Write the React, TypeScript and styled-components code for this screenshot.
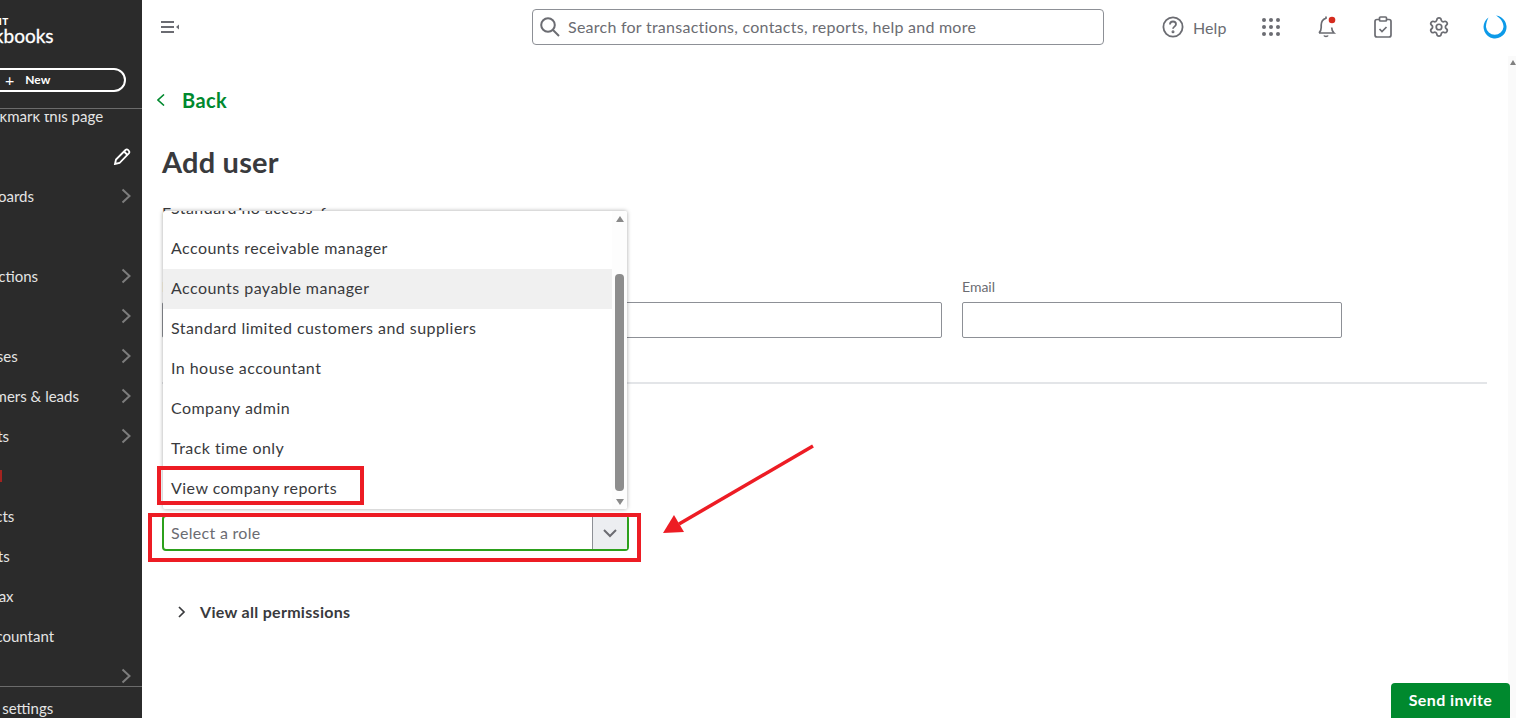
import styled, { createGlobalStyle } from 'styled-components';
import { Settings } from 'lucide-react';

const GlobalStyle = createGlobalStyle`
  html, body { margin: 0; padding: 0; height: 718px; overflow: hidden; background: #fff; }
  body { font-family: Lato, "Open Sans", sans-serif; color: #393a3d; }
`;

const navItems = [
  { label: 'Dashboards', more: true },
  { label: 'Feed', more: false },
  { label: 'Transactions', more: true },
  { label: 'Sales', more: true },
  { label: 'Expenses', more: true },
  { label: 'Customers & leads', more: true },
  { label: 'Projects', more: true },
  { label: 'Time', more: false },
  { label: 'Products', more: false },
  { label: 'Budgets', more: false },
  { label: 'Sales tax', more: false },
  { label: 'My accountant', more: false },
  { label: 'Apps', more: true },
];

const roles = [
  'Standard no access',
  'Accounts receivable manager',
  'Accounts payable manager',
  'Standard limited customers and suppliers',
  'In house accountant',
  'Company admin',
  'Track time only',
  'View company reports',
];

const Page = styled.div`
  display: flex;
  width: 1516px;
  height: 718px;
  overflow: hidden;
  position: relative;
`;

const Sidebar = styled.aside`
  width: 142px;
  flex: none;
  height: 100%;
  background: #2b2b2b;
  color: #e4e4e4;
  display: flex;
  flex-direction: column;
  overflow: hidden;
  font-size: 15px;
`;

const SideTop = styled.div`
  height: 109px;
  flex: none;
  box-sizing: border-box;
  border-bottom: 1px solid #6b6b6b;
  margin-left: -44px;
  margin-bottom: 5px;
  padding-top: 16px;
`;

const Intuit = styled.div`
  font-size: 10px;
  line-height: 10px;
  font-weight: 900;
  letter-spacing: 0.4px;
  color: #fff;
  margin-left: 17px;
`;

const Wordmark = styled.div`
  font-size: 19px;
  line-height: 20px;
  font-weight: 400;
  color: #fff;
  margin-left: 3px;
  -webkit-text-stroke: 0.3px #fff;
`;

const NewButton = styled.div`
  box-sizing: border-box;
  display: flex;
  align-items: center;
  gap: 11px;
  width: 170px;
  height: 24px;
  margin-top: 22px;
  padding: 0 0 1px 47px;
  border: 2px solid #fff;
  border-radius: 12px;
  color: #fff;
  font-size: 12px;
  font-weight: 700;
`;

const PlusSign = styled.span`
  font-size: 16px;
  font-weight: 400;
  line-height: 16px;
`;

const SideScroll = styled.div`
  flex: 1;
  overflow: hidden;
  margin-left: -44px;
  position: relative;
`;

const SideRow = styled.div`
  height: 40px;
  display: flex;
  align-items: center;
  justify-content: space-between;
  padding-right: 11px;
  white-space: nowrap;
`;

const BookmarkRow = styled(SideRow)`
  margin-top: -18px;
  padding-left: 17px;
`;

const Flag = styled.span`
  position: absolute;
  left: 44px;
  top: 356px;
  width: 2px;
  height: 12px;
  background: #a3231f;
`;

const SideBottom = styled.div`
  height: 32px;
  flex: none;
  box-sizing: border-box;
  border-top: 1px solid #6b6b6b;
  margin-left: -44px;
  padding: 12px 0 0 4px;
  line-height: 18px;
`;

const Main = styled.main`
  flex: 1;
  min-width: 0;
  display: flex;
  flex-direction: column;
  position: relative;
`;

const TopBar = styled.header`
  height: 54px;
  flex: none;
  display: flex;
  align-items: center;
  color: #6b6c72;
`;

const MenuToggle = styled.svg`
  margin-left: 19px;
  flex: none;
`;

const SearchBox = styled.div`
  box-sizing: border-box;
  flex: none;
  width: 572px;
  height: 36px;
  margin-left: 351px;
  display: flex;
  align-items: center;
  gap: 8px;
  padding: 0 0 1px 7px;
  border: 1px solid #8d9096;
  border-radius: 4px;
  font-size: 16px;
  letter-spacing: 0.25px;
  color: #6b6c72;
`;

const TopIcons = styled.div`
  display: flex;
  align-items: center;
  margin-left: 58px;
`;

const HelpLabel = styled.span`
  font-size: 16px;
  margin: 0 16px 0 9px;
  letter-spacing: 0.1px;
  color: #6b6c72;
`;

const IconSlot = styled.span`
  width: 56px;
  height: 28px;
  display: flex;
  align-items: center;
  justify-content: center;
`;

const Content = styled.div`
  flex: 1;
  display: flex;
  flex-direction: column;
  padding-left: 20px;
  position: relative;
`;

const BackLink = styled.div`
  display: flex;
  align-items: center;
  gap: 16px;
  height: 28px;
  margin: 32px 0 0 -5px;
  color: #00892e;
  font-size: 20px;
  font-weight: 700;
  letter-spacing: 0.4px;
`;

const Title = styled.h1`
  margin: 30px 0 0;
  font-size: 29px;
  line-height: 36px;
  font-weight: 700;
  letter-spacing: 0.2px;
  color: #393a3d;
`;

const ClippedLine = styled.div`
  margin-top: 22px;
  height: 21px;
  font-size: 16px;
  line-height: 22px;
  letter-spacing: 0.3px;
`;

const FieldRow = styled.div`
  display: grid;
  grid-template-columns: 780px 380px;
  column-gap: 20px;
  margin-top: 56px;
`;

const Field = styled.label`
  display: flex;
  flex-direction: column;
  gap: 7px;
  font-size: 14px;
  line-height: 16px;
  color: #6b6c72;
`;

const TextBox = styled.div`
  box-sizing: border-box;
  height: 36px;
  border: 1px solid #8d9096;
  border-radius: 2px;
`;

const Rule = styled.hr`
  width: 1325px;
  margin: 44px 0 0;
  border: 0;
  border-top: 2px solid #e3e5e8;
`;

const RoleSelect = styled.div`
  box-sizing: border-box;
  display: flex;
  align-items: stretch;
  width: 467px;
  height: 36px;
  margin-top: 131px;
  border: 2px solid #2ca01c;
  border-radius: 4px;
  font-size: 16px;
`;

const RoleValue = styled.div`
  flex: 1;
  display: flex;
  align-items: center;
  padding: 0 0 1px 7px;
  letter-spacing: 0.3px;
  color: #6b6c72;
`;

const RoleCaret = styled.div`
  width: 34px;
  display: flex;
  align-items: center;
  justify-content: center;
  background: #eceef1;
  border-left: 1px solid #8d9096;
`;

const Permissions = styled.div`
  display: flex;
  align-items: center;
  gap: 14px;
  margin: 50px 0 0 15px;
  font-size: 16px;
  line-height: 22px;
  font-weight: 700;
  letter-spacing: 0.3px;
`;

const SendInvite = styled.button`
  position: absolute;
  right: 6px;
  bottom: 0;
  z-index: 1;
  width: 119px;
  height: 35px;
  padding: 0 0 2px;
  border: 0;
  border-radius: 4px 4px 0 0;
  background: #00892e;
  color: #fff;
  font-family: inherit;
  font-size: 16px;
  font-weight: 700;
  letter-spacing: 0.4px;
`;

const PageScrollbar = styled.div`
  position: absolute;
  right: 0;
  top: 56px;
  bottom: 0;
  width: 8px;
  background: #fafafa;
`;

const PageArrow = styled.span`
  display: block;
  width: 0;
  margin: 4px 0 0 2px;
  border-left: 3px solid transparent;
  border-right: 3px solid transparent;
  border-bottom: 5px solid #808080;
`;

const RoleMenu = styled.div`
  position: absolute;
  left: 163px;
  top: 211px;
  width: 464px;
  height: 298px;
  display: flex;
  background: #fff;
  border-radius: 2px;
  box-shadow: 0 0 4px rgba(0, 0, 0, 0.35);
  overflow: hidden;
`;

const RoleList = styled.div`
  flex: 1;
  margin-top: -22px;
`;

const RoleItem = styled.div<{ $active?: boolean }>`
  box-sizing: border-box;
  height: 40px;
  display: flex;
  align-items: center;
  padding: 0 0 4px 8px;
  font-size: 16px;
  letter-spacing: 0.45px;
  background: ${(p) => (p.$active ? '#f0f0f0' : 'transparent')};
`;

const MenuScrollbar = styled.div`
  width: 15px;
  flex: none;
  display: flex;
  flex-direction: column;
  align-items: center;
  background: #fdfdfd;
`;

const ArrowUp = styled.span`
  margin-top: 5px;
  border-left: 4.5px solid transparent;
  border-right: 4.5px solid transparent;
  border-bottom: 6px solid #8a8a8a;
`;

const ArrowDown = styled.span`
  margin-top: 8px;
  border-left: 4.5px solid transparent;
  border-right: 4.5px solid transparent;
  border-top: 6px solid #8a8a8a;
`;

const Thumb = styled.div`
  width: 9px;
  height: 217px;
  margin-top: 52px;
  border-radius: 4px;
  background: #8d8d8d;
`;

const RedBox = styled.div<{ $x: number; $y: number; $w: number; $h: number }>`
  position: absolute;
  box-sizing: border-box;
  left: ${(p) => p.$x}px;
  top: ${(p) => p.$y}px;
  width: ${(p) => p.$w}px;
  height: ${(p) => p.$h}px;
  border: 4px solid #ed1c24;
`;

const RedArrow = styled.svg`
  position: absolute;
  left: 655px;
  top: 440px;
`;

const Chevron = () => (
  <svg width="10" height="16" viewBox="0 0 10 16" fill="none" stroke="#7d7d7d" strokeWidth="2">
    <path d="M1.5 1.5 8.5 8l-7 6.5" />
  </svg>
);

const App = () => {
  return (
    <Page>
      <GlobalStyle />
      <Sidebar>
        <SideTop>
          <Intuit>INTUIT</Intuit>
          <Wordmark>quickbooks</Wordmark>
          <NewButton>
            <PlusSign>+</PlusSign>
            <span>New</span>
          </NewButton>
        </SideTop>
        <SideScroll>
          <BookmarkRow>Bookmark this page</BookmarkRow>
          <SideRow>
            <span />
            <svg width="18" height="18" viewBox="0 -1 18 18" fill="none" stroke="#fff" strokeWidth="1.8">
              <path d="M2 16l1-4.500L12.500 2c.8-.8 1.800-.8 2.500 0l.8.8c.7.7.7 1.700 0 2.500L6.500 15 2 16z" />
              <path d="M11 3.500 14.500 7" />
            </svg>
          </SideRow>
          {navItems.map((item, i) => (
            <SideRow key={i}>
              <span>{item.label}</span>
              {item.more && <Chevron />}
            </SideRow>
          ))}
          <Flag />
        </SideScroll>
        <SideBottom>Menu settings</SideBottom>
      </Sidebar>

      <Main>
        <TopBar>
          <MenuToggle width="20" height="14" viewBox="0 0 20 14" fill="#6b6c72">
            <rect x="0" y="1" width="13" height="2" />
            <rect x="0" y="6" width="13" height="2" />
            <rect x="0" y="11" width="13" height="2" />
            <path d="M18 4.500v5l-3-2.500z" />
          </MenuToggle>
          <SearchBox>
            <svg width="20" height="20" viewBox="0 0 20 20" fill="none" stroke="#6b6c72" strokeWidth="2">
              <circle cx="8" cy="8" r="6.800" />
              <path d="M13 13l6 6" />
            </svg>
            Search for transactions, contacts, reports, help and more
          </SearchBox>
          <TopIcons>
            <svg width="22" height="22" viewBox="0 0 22 22" fill="none" stroke="#6b6c72" strokeWidth="1.800">
              <circle cx="11" cy="11" r="9.600" />
              <path d="M8 8.500c0-1.800 1.400-3 3-3s3 1.100 3 2.700c0 2.400-3 2.400-3 4.600" />
              <circle cx="11" cy="15.800" r="0.600" />
            </svg>
            <HelpLabel>Help</HelpLabel>
            <IconSlot>
              <svg width="18" height="18" viewBox="0 0 18 18" fill="#6b6c72">
                {[2, 9, 16].map((cy) =>
                  [2, 9, 16].map((cx) => <circle key={`${cx}-${cy}`} cx={cx} cy={cy} r="2" />),
                )}
              </svg>
            </IconSlot>
            <IconSlot>
              <svg width="20" height="24" viewBox="0 0 20 24" fill="none" stroke="#6b6c72" strokeWidth="1.700">
                <path d="M2 18c1.600-1.400 2.200-3 2.200-5.500V10C4.200 6.500 6.500 4 9 3.200V1.500M2 18h15c-1.500-1.400-2.300-3-2.300-5.500" />
                <path d="M7 20.500c.6 1.300 3.400 1.300 4 0" />
                <circle cx="15" cy="5" r="3.300" fill="#d52b1e" stroke="none" />
              </svg>
            </IconSlot>
            <IconSlot>
              <svg width="18" height="22" viewBox="0 0 18 22" fill="none" stroke="#6b6c72" strokeWidth="1.700">
                <rect x="1" y="3.500" width="16" height="17.500" rx="2" />
                <rect x="5.500" y="1" width="7" height="4" rx="1" fill="#fff" />
                <path d="M5.500 13l2.500 2.500 4.500-4.500" />
              </svg>
            </IconSlot>
            <IconSlot>
              <Settings size={22} color="#6b6c72" strokeWidth={1.9} />
            </IconSlot>
            <IconSlot>
              <svg width="26" height="26" viewBox="0 0 26 26" fill="#0d9ae8">
                <path d="M6.500 3.500A11.500 11.500 0 1 0 14 1.500C19 4.500 21.500 8.500 21.500 13A8.800 8.800 0 0 1 4 13C4 9.500 5 6.500 6.500 3.500z" />
              </svg>
            </IconSlot>
          </TopIcons>
        </TopBar>

        <Content>
          <BackLink>
            <svg width="9" height="12" viewBox="0 0 9 12" fill="none" stroke="#00892e" strokeWidth="1.600">
              <path d="M7 .5 1 6l6 5.500" />
            </svg>
            Back
          </BackLink>
          <Title>Add user</Title>
          <ClippedLine>For a user in our area f</ClippedLine>
          <FieldRow>
            <Field>
              First and last name
              <TextBox />
            </Field>
            <Field>
              Email
              <TextBox />
            </Field>
          </FieldRow>
          <Rule />
          <RoleSelect>
            <RoleValue>Select a role</RoleValue>
            <RoleCaret>
              <svg width="14" height="9" viewBox="0 0 14 9" fill="none" stroke="#6b6c72" strokeWidth="2">
                <path d="M1 1l6 6 6-6" />
              </svg>
            </RoleCaret>
          </RoleSelect>
          <Permissions>
            <svg width="9" height="14" viewBox="0 0 9 14" fill="none" stroke="#393a3d" strokeWidth="1.700">
              <path d="M2 2l5 5-5 5" />
            </svg>
            View all permissions
          </Permissions>
          <SendInvite>Send invite</SendInvite>
        </Content>
        <PageScrollbar>
          <PageArrow />
        </PageScrollbar>
      </Main>

      <RoleMenu>
        <RoleList>
          {roles.map((role) => (
            <RoleItem key={role} $active={role === 'Accounts payable manager'}>
              {role}
            </RoleItem>
          ))}
        </RoleList>
        <MenuScrollbar>
          <ArrowUp />
          <Thumb />
          <ArrowDown />
        </MenuScrollbar>
      </RoleMenu>

      <RedBox $x={157} $y={466} $w={207} $h={39} />
      <RedBox $x={148} $y={513} $w={493} $h={49} />
      <RedArrow width="165" height="100" viewBox="0 0 165 100" fill="#ed1c24">
        <path d="M158 6 24 84" stroke="#ed1c24" strokeWidth="3.500" />
        <path d="M8 93 19 75l10 17z" />
      </RedArrow>
    </Page>
  );
};

export default App;
